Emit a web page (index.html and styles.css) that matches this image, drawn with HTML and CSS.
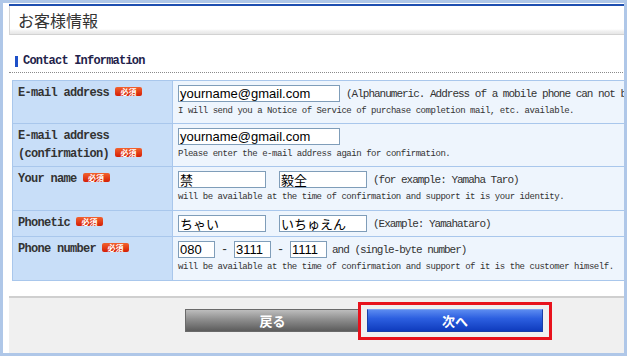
FILE: index.html
```html
<!DOCTYPE html>
<html lang="ja">
<head>
<meta charset="utf-8">
<title>お客様情報</title>
<link rel="stylesheet" href="styles.css">
</head>
<body>
<div class="frame">
  <div class="content">
    <div class="topline"></div>
    <div class="titlebox">お客様情報</div>
    <h2 class="heading"><span class="bar"></span>Contact Information</h2>
    <table class="form">
      <colgroup><col class="c1"><col class="c2"></colgroup>
      <tr class="r-tall">
        <th class="lbl">E-mail address<span class="req">必須</span></th>
        <td class="val">
          <div class="line"><span class="in w-mail">yourname@gmail.com</span><span class="note">(Alphanumeric. Address of a mobile phone can not be used.)</span></div>
          <div class="help">I will send you a Notice of Service of purchase completion mail, etc. available.</div>
        </td>
      </tr>
      <tr class="r-tall">
        <th class="lbl">E-mail address<br>(confirmation)<span class="req">必須</span></th>
        <td class="val">
          <div class="line"><span class="in w-mail">yourname@gmail.com</span></div>
          <div class="help">Please enter the e-mail address again for confirmation.</div>
        </td>
      </tr>
      <tr class="r-tall2">
        <th class="lbl">Your name<span class="req">必須</span></th>
        <td class="val">
          <div class="line"><span class="in w-name jp">禁</span><span class="in w-name jp gap">毅全</span><span class="note">(for example: Yamaha Taro)</span></div>
          <div class="help">will be available at the time of confirmation and support it is your identity.</div>
        </td>
      </tr>
      <tr class="r-short">
        <th class="lbl">Phonetic<span class="req">必須</span></th>
        <td class="val">
          <div class="line"><span class="in w-name jp">ちゃい</span><span class="in w-name jp gap">いちゅえん</span><span class="note">(Example: Yamahataro)</span></div>
        </td>
      </tr>
      <tr class="r-tall2">
        <th class="lbl">Phone number<span class="req">必須</span></th>
        <td class="val">
          <div class="line"><span class="in w-tel">080</span><span class="dash">-</span><span class="in w-tel">3111</span><span class="dash">-</span><span class="in w-tel">1111</span><span class="note">and (single-byte number)</span></div>
          <div class="help">will be available at the time of confirmation and support of it is the customer himself.</div>
        </td>
      </tr>
    </table>
    <div class="footer">
      <a class="btn btn-back">戻る</a>
      <span class="next-wrap"><a class="btn btn-next">次へ</a><span class="highlight"></span></span>
    </div>
  </div>
</div>
</body>
</html>
```
FILE: styles.css
```css
html, body {
  margin: 0;
  padding: 0;
  background: #fff;
}
body {
  width: 630px;
  height: 356px;
  overflow: hidden;
}
.frame {
  box-sizing: border-box;
  width: 627px;
  height: 356px;
  border: 3px solid #afc7e8;
  overflow: hidden;
  padding: 1px 0 0 6px;
  font-family: "Liberation Mono", monospace;
  color: #333;
}
.content {
  width: 700px;
}
.topline {
  height: 2px;
  background: #1f4fb0;
}
.titlebox {
  box-sizing: border-box;
  height: 29px;
  border-left: 1px solid #d6d6d6;
  border-bottom: 1px solid #d2d2d2;
  background: linear-gradient(to bottom, #fff 0, #fff 23px, #f1f1f1 25px, #e6e6e6 28px);
  padding-left: 8px;
  font-family: "Noto Sans CJK JP", sans-serif;
  font-size: 16px;
  line-height: 28px;
  color: #333;
}
.heading {
  margin: 18px 0 0 0;
  padding: 0 0 3px 6px;
  border-bottom: 1px dotted #8a8a8a;
  font-size: 12px;
  line-height: 16px;
  font-weight: bold;
  letter-spacing: -0.8px;
  color: #22224a;
  display: flex;
  align-items: center;
}
.bar {
  display: inline-block;
  width: 3px;
  height: 11px;
  background: #1e50c8;
  margin-right: 5px;
}
.form {
  margin: 7px 0 0 3px;
  border-collapse: collapse;
  table-layout: fixed;
  width: 690px;
}
.c1 { width: 160px; }
.c2 { width: 530px; }
.form th, .form td {
  border: 1px solid #a9c7ec;
  vertical-align: top;
  text-align: left;
}
.r-tall { height: 43px; }
.r-tall2 { height: 44px; }
.r-short { height: 26px; }
.lbl {
  background: #c8def8;
  padding: 3px 0 0 5px;
  font-size: 12px;
  line-height: 18px;
  font-weight: bold;
  letter-spacing: -0.7px;
  color: #333;
}
.req {
  display: inline-block;
  width: 27px;
  height: 9px;
  margin-left: 6px;
  vertical-align: 1px;
  border-radius: 2px;
  background: linear-gradient(to bottom, #f2622e, #d41e06);
  color: #fff;
  font-family: "Noto Sans CJK JP", sans-serif;
  font-size: 8px;
  line-height: 9px;
  font-weight: bold;
  letter-spacing: 0;
  text-align: center;
}
.val {
  background: #eef5fd;
  padding: 4px 5px 0 5px;
}
.line {
  display: flex;
  align-items: center;
  height: 17px;
  white-space: nowrap;
}
.in {
  box-sizing: border-box;
  display: flex;
  align-items: center;
  height: 17px;
  border: 1px solid #7f9db9;
  background: #fff;
  padding: 0 1px;
  font-family: "Liberation Sans", Arial, sans-serif;
  font-size: 13px;
  line-height: 15px;
  color: #000;
}
.jp {
  font-family: "Noto Sans CJK JP", sans-serif;
  font-size: 13px;
  line-height: 15px;
}
.w-mail { width: 162px; }
.w-name { width: 88px; }
.w-tel { width: 37px; }
.gap { margin-left: 13px; }
.dash {
  width: 19px;
  text-align: center;
  font-size: 12px;
}
.note {
  margin-left: 6px;
  font-size: 11px;
  letter-spacing: -1px;
  color: #333;
}
.w-tel + .note { margin-left: 5px; }
.help {
  margin-top: 3px;
  font-size: 9px;
  line-height: 12px;
  letter-spacing: -0.45px;
  white-space: nowrap;
  color: #333;
}
.footer {
  margin-top: 15px;
  height: 46px;
  border-top: 2px solid #cfcfcf;
  background: #f0f0f0;
  padding: 11px 0 0 176px;
  display: flex;
  align-items: flex-start;
  gap: 7px;
}
.btn {
  box-sizing: border-box;
  display: block;
  height: 23px;
  font-family: "Noto Sans CJK JP", sans-serif;
  font-size: 13px;
  font-weight: bold;
  line-height: 21px;
  color: #fff;
  text-align: center;
}
.btn-back {
  width: 175px;
  border: 1px solid #6a6a6a;
  background: linear-gradient(to bottom, #bdbdbd 0, #8e8e8e 45%, #5c5c5c 100%);
}
.next-wrap {
  position: relative;
  display: block;
}
.btn-next {
  width: 176px;
  border: 1px solid #1a3ea8;
  border-top-color: #7ea2f2;
  background: linear-gradient(to bottom, #5a8af0 0, #2c5fe0 40%, #0f3bbd 100%);
}
.highlight {
  position: absolute;
  left: -9px;
  top: -7px;
  width: 194px;
  height: 38px;
  box-sizing: border-box;
  border: 3px solid #e8121c;
}
```
